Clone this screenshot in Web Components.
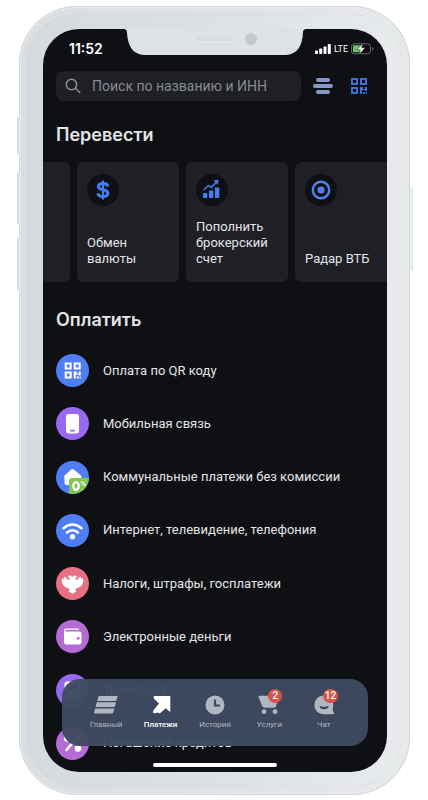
<!DOCTYPE html>
<html lang="ru">
<head>
<meta charset="utf-8">
<meta name="viewport" content="width=device-width, initial-scale=1">
<title>Платежи</title>
<style>
  body { margin: 0; background: #fff; font-family: Roboto, "Liberation Sans", sans-serif; color: #e4e5e8; }
</style>
</head>
<body>
<phone-frame>
  <status-bar time="11:52" network="LTE"></status-bar>
  <search-bar placeholder="Поиск по названию и ИНН"></search-bar>
  <page-section>
    <span slot="title">Перевести</span>
    <card-strip>
      <transfer-card peek></transfer-card>
      <transfer-card icon="dollar">Обмен валюты</transfer-card>
      <transfer-card icon="chart">Пополнить брокерский счет</transfer-card>
      <transfer-card icon="radar">Радар ВТБ</transfer-card>
    </card-strip>
  </page-section>
  <page-section fill>
    <span slot="title">Оплатить</span>
    <pay-list>
      <pay-row icon="qr" tint="#4f7df3">Оплата по QR коду</pay-row>
      <pay-row icon="mobile" tint="#9669ee">Мобильная связь</pay-row>
      <pay-row icon="house" tint="#4f7df3">Коммунальные платежи без комиссии</pay-row>
      <pay-row icon="wifi" tint="#4f7df3">Интернет, телевидение, телефония</pay-row>
      <pay-row icon="eagle" tint="#e87083">Налоги, штрафы, госплатежи</pay-row>
      <pay-row icon="wallet" tint="#b56bd4">Электронные деньги</pay-row>
      <pay-row icon="train" tint="#9669ee">Транспорт</pay-row>
      <pay-row icon="percent" tint="#b56bd4">Погашение кредитов</pay-row>
    </pay-list>
  </page-section>
  <tab-bar slot="overlay">
    <tab-item icon="home">Главный</tab-item>
    <tab-item icon="arrow" active>Платежи</tab-item>
    <tab-item icon="clock">История</tab-item>
    <tab-item icon="cart" count="2">Услуги</tab-item>
    <tab-item icon="chat" count="12">Чат</tab-item>
  </tab-bar>
</phone-frame>

<script>
const QR = '<path fill-rule="evenodd" d="M0 0h7v7H0zM2 2v3h3V2zM9 0h7v7H9zM11 2v3h3V2zM0 9h7v7H0zM2 11v3h3v-3z"/><path d="M9 9h3v2h2V9h2v4h-2v-1h-3v4H9zM12 14h2v2h-2zM15 14h1v2h-1z"/>';
const ICONS = {
  dollar: '<svg viewBox="0 0 32 32" fill="none" stroke="#3f80f6"><path stroke-width="3" d="M21 12.5C20.5 10.300 18.600 9.500 16 9.500C13.200 9.500 11.400 10.600 11.400 12.700C11.400 17 20.900 14.600 20.900 19.200C20.900 21.300 19 22.500 16.100 22.500C13.200 22.500 11.200 21.500 10.800 19.200"/><path stroke-width="2" d="M16 6.500v19"/></svg>',
  chart: '<svg viewBox="0 0 32 32" fill="#3f80f6"><rect x="7" y="19" width="4.300" height="5" rx=".8"/><rect x="13" y="16.500" width="4.300" height="7.500" rx=".8"/><rect x="19" y="13.500" width="4.300" height="10.500" rx=".8"/><path d="M8 15.500l4.500-4 2.500 2 5-5" fill="none" stroke="#3f80f6" stroke-width="1.600" stroke-linecap="round" stroke-linejoin="round"/><path d="M17.500 6.500l5-.8-.8 5z"/></svg>',
  radar: '<svg viewBox="0 0 32 32"><circle cx="16" cy="16" r="8.200" fill="none" stroke="#4f82ee" stroke-width="2.400"/><circle cx="16" cy="16" r="3.600" fill="#4f82ee"/></svg>',
  qr: `<svg viewBox="0 0 33 33" fill="#fff"><g transform="translate(8.700 8.500)">${QR}</g></svg>`,
  mobile: '<svg viewBox="0 0 33 33"><rect x="10" y="7" width="13" height="19.500" rx="2.500" fill="#fff"/><rect x="14" y="22.700" width="5" height="1.800" rx=".9" fill="#9669ee"/></svg>',
  house: '<svg viewBox="0 0 33 33"><path d="M15.200 8.400q1.300-1 2.600 0l7.400 6.300q1 1 0 2L24 17.500V24H10.500q-2 0-2-2v-5q-1-1.200.2-2.400z" fill="#fff"/><path d="M13 20q0-3 3-3h17v16H13z" fill="#7ec850"/><ellipse cx="20" cy="25" rx="2.700" ry="3.900" fill="none" stroke="#fff" stroke-width="2.200"/><g fill="none" stroke="#fff" stroke-width=".8"><circle cx="25.800" cy="21.300" r=".9"/><circle cx="28.600" cy="23.800" r=".9"/><path d="M28.800 20.500l-3.200 4"/></g></svg>',
  wifi: '<svg viewBox="0 0 33 33" fill="none" stroke="#fff" stroke-width="2.500" stroke-linecap="round"><path d="M7.500 14.300Q16.500 6.700 25.500 14.300M11 18.400Q16.500 14 22 18.400"/><circle cx="16.500" cy="22.700" r="2.600" fill="#fff" stroke="none"/></svg>',
  eagle: '<svg viewBox="0 0 33 33" fill="#fff"><path d="M9 9.500L11 12L13 13Q14 12 13.500 10.500L11.500 10.700Q12.500 8 15 8.500L16.500 10L18 8.500Q20.500 8 21.500 10.700L19.500 10.500Q19 12 20 13L22 12L24 9.500Q25.500 10.500 25.200 12L26.700 11.300Q28.300 14 26.500 17Q25 20 20 21.500L19.500 23.500L20.500 25Q18.500 25 17.700 26L16.500 27.200L15.300 26Q14.500 25 12.500 25L13.500 23.500L13 21.500Q8 20 6.500 17Q4.700 14 6.300 11.300L7.800 12Q7.500 10.500 9 9.500Z"/></svg>',
  wallet: '<svg viewBox="0 0 33 33"><path d="M8 10.500q0-2 2-2h11.500q1.700 0 1.700 1.300H10q-.8 0-.8.800t.8.900h13q2.500 0 2.500 2.500v8q0 2.500-2.500 2.500H10.500Q8 24.500 8 22z" fill="#fff"/><circle cx="22.200" cy="18.200" r="1.500" fill="#b56bd4"/></svg>',
  train: '<svg viewBox="0 0 33 33"><path d="M8.500 10.500q0-3 3-3h10q3 0 3 3v11q0 2.500-2.500 2.500l1.500 2h-3l-1-2h-6l-1 2h-3l1.500-2q-2.500 0-2.500-2.500z" fill="#fff"/><path d="M11.500 11.500h10v5h-10zM11 20h3v2h-3zM19 20h3v2h-3z" fill="#9669ee"/></svg>',
  percent: '<svg viewBox="0 0 33 33" fill="#fff"><circle cx="11" cy="11.500" r="3.200"/><circle cx="22" cy="21.500" r="3.300"/><path d="M22 9.500L10.500 23" stroke="#fff" stroke-width="2.600" stroke-linecap="round"/></svg>',
  home: '<svg viewBox="0 0 24 20"><path d="M5 1h18q.8 0 .6.800l-1 3.200q-.3 1-1.300 1H4q-.8 0-.6-.8l.8-3.300Q4.400 1 5 1zM3.300 7.300h18q.8 0 .6.800l-1 3q-.3 1-1.300 1H2.300q-.8 0-.6-.8l.8-3.100q.2-.9.800-.9zM1.600 13.500h18q.8 0 .6.800l-1 3.100q-.3 1-1.300 1H.700q-.8 0-.6-.8l.8-3.200q.2-.9.700-.9z"/></svg>',
  arrow: '<svg viewBox="0 0 24 20"><path d="M4.700 2Q4.500 1 5.500 1H20.500Q21.300 1 21.300 1.800V15.800Q21.300 17.300 20.200 16.300L16.800 13.200L11.300 18Q10.300 18.800 9 17.600L5.500 18.200Q3.700 18.500 4 16.800L4.500 15.300L10 8.500L5.500 4.300Q4.700 3.500 4.700 2Z"/></svg>',
  clock: '<svg viewBox="0 0 24 20"><circle cx="12" cy="10" r="9.500"/><path d="M12 4.500v6h5" fill="none" stroke="#3e4a61" stroke-width="2.200"/></svg>',
  cart: '<svg viewBox="0 0 24 20"><path d="M2 .8H20.300Q22.200.8 21.600 2.500L19.200 11Q18.700 12.700 17 12.700H8Q5.800 12.700 5 10.800L1.500 2Q1.200.8 2 .8z"/><circle cx="7" cy="16.700" r="2.400"/><circle cx="18" cy="16.700" r="2.400"/></svg>',
  chat: '<svg viewBox="0 0 24 20"><path d="M12 .5C17.500.5 21.200 4.500 21.200 9.500C21.200 13 20.200 15 21.800 17.500Q22.500 19.300 21 19.300H12C6.500 19.300 2.500 15.300 2.500 10S6.500.5 12 .5Z"/><path d="M7.500 10.800Q12 13 16.500 10.800Q16.300 14.300 12 14.300T7.500 10.800Z" fill="#3e4a61"/></svg>'
};

function define(name, css, markup) {
  customElements.define(name, class extends HTMLElement {
    connectedCallback() {
      if (this.shadowRoot) return;
      const t = document.createElement('template');
      t.innerHTML = `<style>*{box-sizing:border-box}svg{display:block}${css}</style>${typeof markup === 'function' ? markup(this) : markup}`;
      this.attachShadow({ mode: 'open' }).append(t.content.cloneNode(true));
    }
  });
}

define('phone-frame', `
  :host { display: block; box-sizing: border-box; min-height: 100vh; padding: 6px 18px 5px 19px; }
  .body { position: relative; display: flex; min-height: calc(100vh - 11px); padding: 23px 23px 23px 24px; border-radius: 58px;
    background: linear-gradient(90deg, #d5dadd, #dde1e4 50%, #e9ebed);
    box-shadow: inset 0 0 0 1px #d3d7da, inset 0 0 0 2px #e8ebed, inset 0 0 0 8px #ffffff30, inset 0 0 0 9px #c8cdd133; }
  .screen { position: relative; display: flex; flex-direction: column; flex: 1; min-width: 0; overflow: hidden; border-radius: 36px; background: #0f1014; }
  .notch { position: absolute; top: -1px; left: 50%; width: 184px; margin-left: -92px; }
  .overlay { position: absolute; left: 19px; right: 19px; bottom: 26px; }
  .homebar { position: absolute; left: 32%; right: 32%; bottom: 5px; height: 4px; border-radius: 2px; background: #fff; }
  .key { position: absolute; width: 3px; background: #e0e4e6; border-radius: 2px; }
  .l { left: -2px; border-left: 1px solid #d3d7da; }
  .r { right: -3px; border-right: 1px solid #dfe1e3; background: #eff0f1; }
  .k1 { top: 111px; height: 37px; } .k2 { top: 166px; height: 52px; } .k3 { top: 232px; height: 52px; } .k4 { top: 182px; height: 83px; }`,
  `<div class="body"><i class="key l k1"></i><i class="key l k2"></i><i class="key l k3"></i><i class="key r k4"></i>
   <main class="screen"><slot></slot>
     <svg class="notch" viewBox="0 0 184 27"><path fill="#dee2e5" d="M0 0H184V1C181 1 180 2 180 5C179 19 174 27 161 27H23C10 27 5 19 4 5C4 2 3 1 0 1Z"/>
       <rect x="71" y="8" width="39" height="7" rx="3.500" fill="#e4e7e9"/><rect x="72" y="8.500" width="37" height="4.500" rx="2.200" fill="#d9dddf"/><circle cx="128" cy="11" r="6" fill="#c4c8cb"/></svg>
     <div class="overlay"><slot name="overlay"></slot></div><div class="homebar"></div>
   </main></div>`);

define('status-bar', `
  :host { display: flex; justify-content: space-between; align-items: center; height: 42px; padding: 0 13px 2px 26px; color: #fff; box-sizing: border-box; flex: none; }
  .time { font: 600 14px/16px Inter, sans-serif; }
  .right { display: flex; align-items: center; gap: 3px; }
  .net { font: 400 9px/12px Roboto, sans-serif; }`,
  el => `<span class="time">${el.getAttribute('time')}</span><span class="right">
   <svg width="16" height="10" viewBox="0 0 16 10" fill="#fff"><rect y="6.500" width="3" height="3.500" rx=".8"/><rect x="4.200" y="4.500" width="3" height="5.500" rx=".8"/><rect x="8.500" y="2.500" width="3" height="7.500" rx=".8"/><rect x="12.800" width="3" height="10" rx=".8"/></svg>
   <span class="net">${el.getAttribute('network')}</span>
   <svg width="23" height="12" viewBox="0 0 23 12"><rect x=".5" y=".8" width="19" height="10" rx="2.700" fill="none" stroke="#62656a"/><rect x="2" y="2.300" width="8.500" height="7" rx="1" fill="#5dc95b"/><path d="M21 4.300q1.500.3 1.500 1.500T21 7.300z" fill="#62656a"/><path d="M12 .3L5.800 6.800h3.500L8 11.500l6.300-6.700h-3.600z" fill="#fff" stroke="#0f1014" stroke-width=".5"/></svg></span>`);

define('search-bar', `
  :host { display: flex; align-items: center; padding: 0 20px 0 13px; gap: 12px; flex: none; }
  label { display: flex; align-items: center; gap: 11px; flex: 1; min-width: 0; height: 30px; padding: 0 9px; border-radius: 8px; background: #1e2026; }
  label svg { flex: none; }
  input { flex: 1; min-width: 0; border: 0; padding: 0; outline: 0; background: none; color: #e4e5e8; font: 400 14px/20px Roboto, sans-serif; }
  input::placeholder { color: #878a92; opacity: 1; }
  button { display: block; flex: none; border: 0; padding: 0; background: none; }
  .tools { display: flex; align-items: center; gap: 18px; }`,
  el => `<label><svg width="16" height="16" viewBox="0 0 16 16" fill="none" stroke="#8b8e96" stroke-width="1.500" stroke-linecap="round"><circle cx="6.500" cy="6.500" r="5.200"/><path d="M10.500 10.500l4.300 4"/></svg>
   <input type="text" aria-label="Поиск" placeholder="${el.getAttribute('placeholder')}"></label>
   <span class="tools"><button aria-label="Фильтр"><svg width="20" height="16" viewBox="0 0 20 16" fill="#8499c3"><rect x="3" width="14" height="4" rx="2"/><rect y="6" width="20" height="4" rx="2"/><rect x="3" y="12" width="14" height="4" rx="2"/></svg></button>
   <button aria-label="Сканировать код"><svg width="16" height="16" viewBox="0 0 16 16" fill="#3f70dc">${QR}</svg></button></span>`);

define('page-section', `
  :host { display: flex; flex-direction: column; flex: none; padding-top: 22px; }
  :host([fill]) { flex: 1; padding-top: 26px; }
  h2 { margin: 0 13px 15px; font: 600 18px/24px Inter, sans-serif; }
  :host([fill]) h2 { margin-bottom: 22px; }`,
  `<h2><slot name="title"></slot></h2><slot></slot>`);

define('card-strip', `:host { display: flex; gap: 7px; overflow: hidden; }`, `<slot></slot>`);

define('transfer-card', `
  :host { display: block; flex: none; width: 102px; }
  :host([peek]) { width: 27px; }
  button { display: flex; flex-direction: column; justify-content: space-between; align-items: flex-start; width: 100%; height: 120px; padding: 12px 4px 15px 10px; border: 0; border-radius: 6px; background: #1e2026; color: inherit; text-align: left; font: 400 13px/16px Roboto, sans-serif; }
  :host([peek]) button { padding: 0; border-radius: 0 6px 6px 0; }
  .icon { width: 32px; height: 32px; border-radius: 50%; background: #0f1014; }`,
  el => el.hasAttribute('peek') ? `<button aria-label="Предыдущая карточка"></button>` :
   `<button><span class="icon">${ICONS[el.getAttribute('icon')]}</span><span><slot></slot></span></button>`);

define('pay-list', `:host { display: flex; flex-direction: column; justify-content: space-between; flex: 1; gap: 20px; padding: 0 13px 12px; }`, `<slot></slot>`);

define('pay-row', `
  :host { display: block; flex: none; }
  a { display: flex; align-items: center; gap: 14px; color: inherit; text-decoration: none; font: 400 13px/18px Roboto, sans-serif; }
  .icon { flex: none; width: 33px; height: 33px; overflow: hidden; border-radius: 50%; }`,
  el => `<a href="#"><span class="icon" style="background:${el.getAttribute('tint')}">${ICONS[el.getAttribute('icon')]}</span><span><slot></slot></span></a>`);

define('tab-bar', `
  :host { display: block; }
  nav { display: flex; align-items: center; height: 67px; padding: 0 17px; border-radius: 18px; background: #3f4a60f6; }`,
  `<nav><slot></slot></nav>`);

define('tab-item', `
  :host { display: block; flex: 1; min-width: 0; color: #b0b7c1; }
  :host([active]) { color: #fff; }
  a { position: relative; display: flex; flex-direction: column; align-items: center; gap: 4px; color: inherit; text-decoration: none; font: 400 8px/12px Roboto, sans-serif; white-space: nowrap; }
  :host([active]) a { font-weight: 500; }
  svg { width: 24px; height: 20px; fill: currentColor; }
  .count { position: absolute; left: 50%; top: -6px; margin-left: -1px; min-width: 14px; height: 14px; padding: 0 2px; border-radius: 7px; background: #d9544a; color: #fff; text-align: center; font: 500 10px/14px Roboto, sans-serif; }`,
  el => `<a href="#">${ICONS[el.getAttribute('icon')]}<span><slot></slot></span>${el.hasAttribute('count') ? `<span class="count">${el.getAttribute('count')}</span>` : ''}</a>`);
</script>
</body>
</html>
